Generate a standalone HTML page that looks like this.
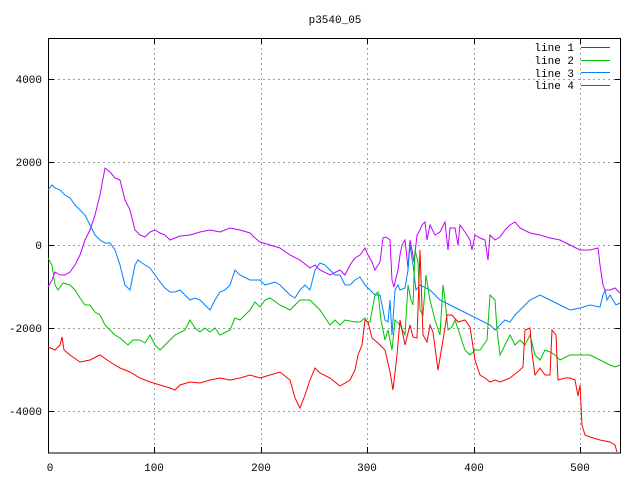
<!DOCTYPE html>
<html><head><style>html,body{margin:0;padding:0;background:#fff}svg{display:block}text{font-family:"Liberation Mono","DejaVu Sans Mono",monospace;font-size:11px;fill:#000}</style></head><body>
<svg width="640" height="480" viewBox="0 0 640 480" xmlns="http://www.w3.org/2000/svg">
<g stroke="#a0a0a0" stroke-width="1" stroke-dasharray="2,3" fill="none">
<path d="M154.5 38V453M261.5 38V453M367.5 38V453M474.5 38V453M580.5 38V453"/>
<path d="M48 79.5H621M48 162.5H621M48 245.5H621M48 328.5H621M48 411.5H621"/>
</g>
<g stroke="#000" stroke-width="1" fill="none">
<rect x="48.5" y="38.5" width="572" height="414.5"/>
<path d="M48 79.5h6M48 162.5h6M48 245.5h6M48 328.5h6M48 411.5h6M621 79.5h-6M621 162.5h-6M621 245.5h-6M621 328.5h-6M621 411.5h-6"/>
<path d="M154.5 453v-6M261.5 453v-6M367.5 453v-6M474.5 453v-6M580.5 453v-6M154.5 38v6M261.5 38v6M367.5 38v6M474.5 38v6M580.5 38v6"/>
</g>
<text x="335" y="23" text-anchor="middle">p3540_05</text>
<g text-anchor="end">
<text x="42" y="83">4000</text><text x="42" y="166">2000</text><text x="42" y="249">0</text><text x="42" y="332">-2000</text><text x="42" y="415">-4000</text>
</g>
<g text-anchor="middle">
<text x="50" y="471">0</text><text x="154" y="471">100</text><text x="261" y="471">200</text><text x="367" y="471">300</text><text x="474" y="471">400</text><text x="580" y="471">500</text>
</g>
<g text-anchor="end">
<text x="574" y="51">line 1</text><text x="574" y="64">line 2</text><text x="574" y="77">line 3</text><text x="574" y="89">line 4</text>
</g>
<g stroke-width="1" fill="none">
<path stroke="#ff0000" d="M581 47.5h29"/><path stroke="#00c000" d="M581 60.5h29"/><path stroke="#0080ff" d="M581 72.5h29"/><path stroke="#c000ff" d="M581 85.5h29"/>
</g>
<g fill="none" stroke-width="1" stroke-linejoin="miter">
<polyline stroke="#c000ff" points="48,287 52,280 55,272 60,275 65,275 70,272 75,265 80,255 85,240 90,230 95,215 100,195 105,168 110,172 115,178 120,180 125,200 130,210 135,230 140,235 145,237 150,232 155,230 160,233 165,235 170,240 175,238 180,236 190,235 200,232 210,230 220,232 230,228 240,230 250,233 255,238 260,242 270,245 280,248 290,255 300,260 310,268 315,265 320,270 330,275 340,270 345,275 350,265 355,258 360,255 365,248 368,255 372,262 375,270 380,262 383,238 386,237 390,240 392,280 394,287 396,278 398,270 400,255 402,245 405,240 408,268 410,240 412,250 414,262 417,235 420,230 422,225 425,222 427,240 430,225 435,235 440,232 445,222 448,250 450,228 455,228 458,245 460,225 465,232 470,240 472,250 475,235 480,238 485,240 488,260 490,235 495,240 500,237 505,230 510,225 515,222 520,228 530,233 540,235 550,238 560,240 570,245 580,250 590,250 598,248 600,265 603,285 605,290 610,290 615,288 620,293"/>
<polyline stroke="#0080ff" points="48,190 52,185 55,188 60,190 65,195 70,198 75,205 80,210 85,215 90,225 95,235 100,240 105,243 110,243 115,250 120,265 125,285 130,290 132,280 135,265 138,260 145,265 150,268 155,275 160,282 165,288 170,292 175,292 180,290 185,295 190,300 195,298 200,300 205,305 210,310 215,300 220,292 225,290 230,285 235,270 240,275 250,280 260,280 265,285 275,282 280,285 285,290 290,295 295,298 300,290 305,285 310,290 315,270 320,263 325,265 330,270 335,275 340,275 345,285 350,285 355,280 360,277 365,285 370,290 375,295 380,295 385,320 388,322 390,300 392,335 395,290 398,285 400,290 405,288 408,270 410,245 413,265 416,290 420,285 430,290 435,295 440,300 450,305 460,310 470,315 480,320 490,325 495,330 500,325 505,320 510,322 515,315 520,310 525,305 530,300 540,295 550,300 560,305 570,310 580,308 590,305 600,307 603,295 605,290 607,300 610,295 613,300 616,305 620,303"/>
<polyline stroke="#00c000" points="48,258 52,265 55,285 58,290 63,283 70,285 75,290 80,298 85,305 90,305 95,312 100,315 105,325 110,330 115,335 120,338 128,345 133,340 140,340 145,343 150,335 155,345 160,350 165,345 170,340 175,335 185,330 190,320 195,328 200,332 205,328 210,332 215,328 220,335 230,330 235,318 240,320 250,310 255,302 260,307 265,300 270,298 280,305 290,310 300,300 310,300 320,310 330,325 335,320 340,325 345,320 355,322 360,322 365,318 367,322 370,322 375,295 378,292 381,320 385,340 388,330 392,350 395,320 400,325 405,335 408,285 411,300 413,305 415,250 418,262 420,310 423,315 426,275 430,300 435,320 440,335 443,285 445,300 448,330 452,327 455,320 460,335 465,350 470,355 475,350 480,350 487,340 490,295 495,300 497,330 500,355 505,345 510,335 515,345 520,340 525,345 530,335 535,355 540,360 545,350 550,352 555,355 560,360 570,355 580,355 590,355 600,360 610,365 615,367 620,365"/>
<polyline stroke="#ff0000" points="48,347 55,350 60,345 62,337 64,350 70,355 80,362 90,360 100,355 110,362 120,368 130,372 140,378 150,382 160,385 170,388 175,390 180,385 190,382 200,383 210,380 220,378 230,380 240,378 250,375 260,378 270,375 280,372 290,380 295,398 300,408 305,395 310,380 315,368 320,373 330,378 340,386 350,380 355,370 358,355 362,345 365,320 368,322 372,338 378,343 385,350 390,372 393,390 397,355 400,320 405,345 410,325 413,337 417,338 420,250 423,335 427,342 430,325 433,332 438,370 443,340 447,315 452,315 458,322 465,320 470,327 475,360 480,375 485,378 490,382 495,380 500,382 510,378 520,370 523,367 525,330 530,328 532,353 535,375 540,368 545,375 550,375 552,330 556,335 558,380 565,378 570,378 575,380 578,396 580,385 582,425 585,435 590,437 600,440 610,442 615,445 617,452"/>
</g>
</svg>
</body></html>
